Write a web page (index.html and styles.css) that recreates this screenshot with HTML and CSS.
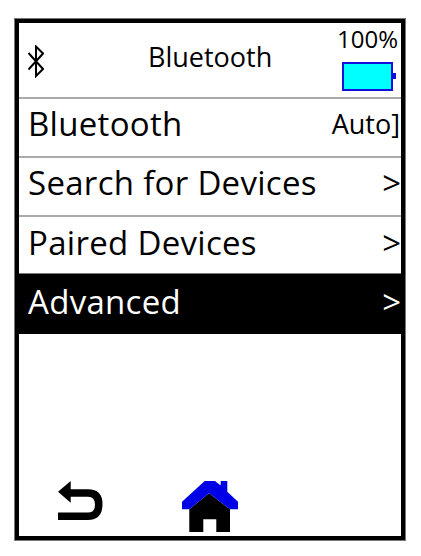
FILE: index.html
```html
<!DOCTYPE html>
<html lang="en">
<head>
    <meta charset="UTF-8">
    <title>Bluetooth</title>
    <link rel="stylesheet" href="styles.css">
</head>
<body>
    <div class="screen">
        <div class="header">
            <svg class="bt-icon" width="16" height="33" viewBox="0 0 16 33">
                <path d="M0.500 8 L15 24 L8 31 V1.500 L15 8.500 L0.500 24.500" fill="none" stroke="#000" stroke-width="2"/>
            </svg>
            <span class="title">Bluetooth</span>
            <div class="status">
                <span class="percent">100%</span>
                <svg class="battery" width="54" height="29" viewBox="0 0 54 29">
                    <rect x="1" y="1" width="49" height="27" fill="#00ffff" stroke="#1010d8" stroke-width="2"/>
                    <rect x="51" y="11" width="3" height="6" fill="#1010d8"/>
                </svg>
            </div>
        </div>
        <div class="row">
            <span class="label">Bluetooth</span>
            <span class="value">Auto]</span>
        </div>
        <div class="row">
            <span class="label">Search for Devices</span>
            <span class="arrow">&gt;</span>
        </div>
        <div class="row before-selected">
            <span class="label">Paired Devices</span>
            <span class="arrow">&gt;</span>
        </div>
        <div class="row selected">
            <span class="label">Advanced</span>
            <span class="arrow">&gt;</span>
        </div>
        <div class="footer">
            <svg class="back" width="45" height="39" viewBox="0 0 45 39">
                <path d="M0 10.700 L12.700 0 V8.300 H30 Q44.500 8.300 44.500 23 Q44.500 39 30 39 H0 V31.500 H30 Q37 31.500 37 23.500 Q37 15.700 30 15.700 H12.700 V21.700 Z" fill="#000"/>
            </svg>
            <svg class="home" width="56" height="51" viewBox="0 0 56 51">
                <path d="M7.300 28.300 L27 12.300 L48 28.300 V51 H34.300 V38.300 H21.300 V51 H7.300 Z" fill="#000"/>
                <path d="M0 20.700 L22.700 0 H33 L38 4 H38.700 V0 H45.300 V10.700 L56 20.700 V28.300 H48 L27 12.300 L7.300 28.300 H0 Z" fill="#0000e6"/>
            </svg>
        </div>
    </div>
</body>
</html>
```

FILE: styles.css
```css
* {
    margin: 0;
    padding: 0;
    box-sizing: border-box;
}

body {
    background-color: #ffffff;
    font-family: "Open Sans", "Noto Sans", sans-serif;
    color: #000000;
    padding: 18px 0 0 14px;
}

.screen {
    width: 392px;
    height: 523px;
    border: 5px solid #000000;
    outline: 1px solid #777;
    outline-offset: -1px;
    display: flex;
    flex-direction: column;
}

.header {
    height: 76px;
    border-bottom: 2px solid #aaaaaa;
    display: flex;
    align-items: center;
    position: relative;
}

.bt-icon {
    margin-left: 9px;
    margin-top: 2px;
}

.title {
    position: absolute;
    left: 129px;
    top: 16px;
    font-size: 27px;
    line-height: 36px;
}

.status {
    position: absolute;
    right: 3px;
    top: 0;
    display: flex;
    flex-direction: column;
    align-items: flex-end;
}

.percent {
    font-size: 24px;
    line-height: 32px;
}

.battery {
    margin-top: 7px;
    margin-right: 2px;
}

.row {
    height: 59px;
    border-bottom: 2px solid #aaaaaa;
    display: flex;
    align-items: center;
    justify-content: space-between;
    padding: 0 0 9px 9px;
}

.label {
    font-size: 33px;
    letter-spacing: 0.300px;
}

.value {
    font-size: 27px;
    margin-right: 1px;
}

.arrow {
    font-size: 33px;
}

.before-selected {
    height: 57px;
    border-bottom: 1px solid #777777;
    padding-bottom: 6px;
}

.selected {
    background-color: #000000;
    color: #ffffff;
    height: 60px;
    border-bottom: none;
    padding-bottom: 5px;
}

.footer {
    margin-top: auto;
    display: flex;
    align-items: flex-end;
    padding: 0 0 4px 39px;
}

.back {
    margin-bottom: 12px;
}

.home {
    margin-left: 79px;
}
```
